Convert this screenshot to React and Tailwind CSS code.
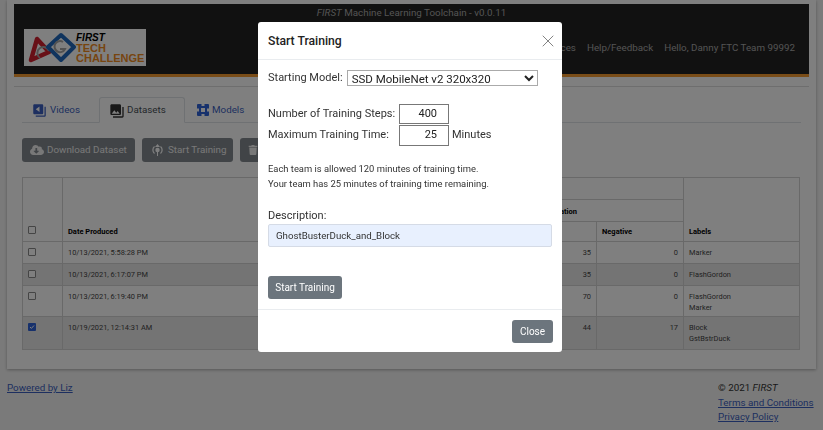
import React from "react";
import { X } from "lucide-react";
import { FaCloudDownloadAlt, FaTrash } from "react-icons/fa";
import { MdVideoLibrary, MdPhotoLibrary } from "react-icons/md";

const rows = [
  { on: false, date: "10/13/2021, 5:58:28 PM", pos: 35, neg: 0, labels: ["Marker"], h: "h-[22px]", bg: "" },
  { on: false, date: "10/13/2021, 6:17:07 PM", pos: 35, neg: 0, labels: ["FlashGordon"], h: "h-[22px]", bg: "bg-[#e8e8e8]" },
  { on: false, date: "10/13/2021, 6:19:40 PM", pos: 70, neg: 0, labels: ["FlashGordon", "Marker"], h: "h-[31px]", bg: "" },
  { on: true, date: "10/19/2021, 12:14:31 AM", pos: 44, neg: 17, labels: ["Block", "GstBstrDuck"], h: "h-[33px]", bg: "bg-[#e8e8e8]" },
];

const FtcLogo = () => (
  <svg width="48" height="32" viewBox="0 0 48 32" fill="none">
    <path d="M3 28 L9 7 L21 20 Z" stroke="#d0202f" strokeWidth="4.5" strokeLinejoin="round" />
    <path d="M12 26 a6 6 0 1 1 9 -7" stroke="#a5a5a5" strokeWidth="2" />
    <path d="M33 3 L46 15 L33 28 L20 15 Z" stroke="#2068bd" strokeWidth="4" strokeLinejoin="round" />
    <path d="M35 10 a5.5 5.5 0 1 0 2 7 h-5" stroke="#a5a5a5" strokeWidth="2" />
  </svg>
);

const ModelsIcon = () => (
  <svg width="12" height="12" viewBox="0 0 12 12">
    <rect width="12" height="12" rx="1" fill="#2f62d8" />
    <path d="M4.5 0h3v2h-3zM0 4.5h2v3H0zM10 4.5h2v3h-2zM4.5 10h3v2h-3zM4 4h4v4H4z" fill="#fff" />
  </svg>
);

const TrainIcon = () => (
  <svg width="11" height="12" viewBox="0 0 11 12" fill="none">
    <path d="M2.5 2.5a4.6 4.6 0 0 0 0 7M8.5 2.5a4.6 4.6 0 0 1 0 7" stroke="#fff" strokeWidth="1.2" />
    <path d="M5.5 0 L8 3 H3 Z" fill="#fff" />
    <circle cx="5.5" cy="6" r="2.2" fill="#fff" />
    <path d="M5 8h1v4H5z" fill="#fff" />
  </svg>
);

const Check = ({ on }) =>
  on ? (
    <span className="flex h-[8px] w-[8px] items-center justify-center rounded-[1px] bg-[#2f62d8]">
      <svg width="6" height="6" viewBox="0 0 6 6" fill="none">
        <path d="M1 3l1.4 1.4L5 1.5" stroke="#fff" strokeWidth="1" />
      </svg>
    </span>
  ) : (
    <span className="block h-[8px] w-[8px] rounded-[1px] border border-[#8a8a8a] bg-white" />
  );

const Th = ({ className = "", children, ...rest }) => (
  <th className={`border border-[#d2d2d2] px-[5px] pb-[4px] align-bottom text-left text-[7.5px] font-bold text-black ${className}`} {...rest}>
    {children}
  </th>
);

const Td = ({ className = "", children }) => (
  <td className={`border border-[#d2d2d2] px-[5px] pt-[5px] align-top text-[7.4px] leading-[11px] text-[#444] ${className}`}>
    {children}
  </td>
);

export default function App() {
  return (
    <div className="relative h-[430px] w-[823px] overflow-hidden bg-[#f5f5f5] font-['Roboto',sans-serif]">
      {/* page behind the dialog */}
      <div className="mx-[7px] h-[369px] bg-white pt-[4px] shadow-[0_1px_3px_rgba(0,0,0,0.3)]">
        <header className="mx-[7px] h-[73px] border-b-[3px] border-[#f59a30] bg-[#222]">
          <div className="pt-[2px] text-center text-[9.8px] leading-[13px] text-[#a8a8a8]">
            <i>FIRST</i> Machine Learning Toolchain - v0.0.11
          </div>
          <div className="flex items-start justify-between pl-[10px] pr-[14px] pt-[10px]">
            <div className="flex h-[37px] w-[122px] items-center bg-[#fff] pl-[4px] font-['Liberation_Sans',sans-serif]">
              <FtcLogo />
              <div className="mt-[1px] text-[11px] font-bold leading-[10px] text-[#ef8a1f]">
                <div className="text-[10px] italic text-black">FIRST</div>
                <div>TECH</div>
                <div>CHALLENGE</div>
              </div>
            </div>
            <nav className="flex gap-[11px] pt-[12px] text-[9.8px] leading-[13px] text-[#a8a8a8]">
              <span>Resources</span>
              <span>Help/Feedback</span>
              <span>Hello, Danny FTC Team 99992</span>
            </nav>
          </div>
        </header>

        <div className="mx-[7px] mt-[9px] border-t border-[#ddd] px-[8px]">
          <div className="mt-[10px] flex h-[26px] items-stretch border-b border-[#dee2e6] pt-[1px] text-[9.8px]">
            <div className="flex w-[77px] items-center gap-[3px] pl-[10px] text-[#3b5fc0]">
              <MdVideoLibrary className="h-[15px] w-[15px] -scale-x-100" />
              Videos
            </div>
            <div className="-mb-px -mt-[1px] flex w-[86px] items-center gap-[2px] rounded-t-[3px] border border-[#dee2e6] border-b-white pl-[9px] pt-[1px] text-[#495057]">
              <MdPhotoLibrary className="h-[16px] w-[16px] -scale-x-100 text-[#333]" />
              Datasets
            </div>
            <div className="flex items-center gap-[3px] pl-[12px] text-[#3b5fc0]">
              <ModelsIcon />
              Models
            </div>
          </div>

          <div className="mt-[15px] flex gap-[7px] text-[9.8px] text-[#f0f0f0]">
            <div className="flex h-[24px] w-[113px] items-center gap-[3px] rounded-[3px] bg-[#83898f] pl-[8px]">
              <FaCloudDownloadAlt className="h-[14px] w-[14px]" />
              Download Dataset
            </div>
            <div className="flex h-[24px] w-[91px] items-center gap-[5px] rounded-[3px] bg-[#83898f] pl-[10px]">
              <TrainIcon />
              Start Training
            </div>
            <div className="flex h-[24px] w-[80px] items-center gap-[4px] rounded-[3px] bg-[#83898f] pl-[8px]">
              <FaTrash className="h-[10px] w-[10px]" />
              Delete
            </div>
          </div>

          <table className="mt-[15px] w-[777px] table-fixed border-collapse">
            <colgroup>
              <col className="w-[40px]" />
              <col className="w-[300px]" />
              <col className="w-[234px]" />
              <col className="w-[87px]" />
              <col className="w-[116px]" />
            </colgroup>
            <thead>
              <tr className="h-[22px]">
                <Th rowSpan={3}>
                  <span className="block pb-[3px]"><Check on={false} /></span>
                </Th>
                <Th rowSpan={3}>Date Produced</Th>
                <Th colSpan={2} />
                <Th rowSpan={3}>Labels</Th>
              </tr>
              <tr className="h-[22px]">
                <Th colSpan={2} className="pr-[106px] text-right">Annotation</Th>
              </tr>
              <tr className="h-[20px]">
                <Th>Positive</Th>
                <Th>Negative</Th>
              </tr>
            </thead>
            <tbody>
              {rows.map((r) => (
                <tr key={r.date} className={`${r.h} ${r.bg}`}>
                  <Td>
                    <span className="mt-[1px] block"><Check on={r.on} /></span>
                  </Td>
                  <Td>{r.date}</Td>
                  <Td className="text-right">{r.pos}</Td>
                  <Td className="text-right">{r.neg}</Td>
                  <Td>
                    {r.labels.map((l) => (
                      <div key={l}>{l}</div>
                    ))}
                  </Td>
                </tr>
              ))}
            </tbody>
          </table>
        </div>
      </div>

      <footer className="flex justify-between pl-[7px] pr-[10px] pt-[12px] text-[9.8px] leading-[14.5px]">
        <a className="text-[#3b5fc0] underline">Powered by Liz</a>
        <div className="w-[95px] whitespace-nowrap text-[#333]">
          <div>© 2021 <i>FIRST</i></div>
          <a className="block text-[#3b5fc0] underline">Terms and Conditions</a>
          <a className="block text-[#3b5fc0] underline">Privacy Policy</a>
        </div>
      </footer>

      {/* dialog */}
      <div className="fixed inset-0 flex justify-center bg-black/50 pt-[22px]">
        <div className="mr-[3px] flex h-[330px] w-[304px] flex-col rounded-[3px] bg-white text-[11px] text-[#333]">
          <div className="flex h-[38px] items-center justify-between border-b border-[#e9ecef] pl-[10px] pr-[4px]">
            <h2 className="pt-[1px] text-[12.2px] font-medium text-[#222]">Start Training</h2>
            <X className="h-[20px] w-[20px] text-[#777]" strokeWidth={1.1} />
          </div>

          <div className="flex-1 px-[10px] pt-[10px]">
            <div className="flex h-[16px] items-center gap-[4px]">
              <span className="whitespace-nowrap">Starting Model:</span>
              <select className="h-[16px] w-[191px] border border-[#aaa] bg-white text-[11.5px] text-[#222]" defaultValue="a">
                <option value="a">SSD MobileNet v2 320x320</option>
              </select>
            </div>

            <div className="mt-[18px] flex h-[20px] items-center">
              <span className="w-[131px] whitespace-nowrap">Number of Training Steps:</span>
              <div className="flex h-[20px] w-[50px] items-center justify-end border border-[#777] pr-[11px] text-[#222]">400</div>
            </div>
            <div className="mt-[1px] flex h-[21px] items-center">
              <span className="w-[131px] whitespace-nowrap">Maximum Training Time:</span>
              <div className="flex h-[21px] w-[50px] items-center justify-end border border-[#777] pr-[11px] text-[#222]">25</div>
              <span className="ml-[3px]">Minutes</span>
            </div>

            <p className="mt-[16px] text-[9.4px] leading-[14.5px]">
              Each team is allowed 120 minutes of training time.
              <br />
              Your team has 25 minutes of training time remaining.
            </p>

            <div className="mt-[18px] leading-[14px]">Description:</div>
            <div className="mt-[1px] flex h-[23px] items-center rounded-[2px] border border-[#d5dbe6] bg-[#e8f0fe] pl-[7px] pt-[1px] text-[9.7px] text-[#333]">
              GhostBusterDuck_and_Block
            </div>

            <button className="mt-[29px] h-[23px] w-[74px] rounded-[3px] bg-[#6c757d] text-[10px] text-white">
              Start Training
            </button>
          </div>

          <div className="flex h-[43px] items-center justify-end border-t border-[#e9ecef] pr-[9px]">
            <button className="h-[23px] w-[41px] rounded-[3px] bg-[#6c757d] text-[10px] text-white">Close</button>
          </div>
        </div>
      </div>
    </div>
  );
}
